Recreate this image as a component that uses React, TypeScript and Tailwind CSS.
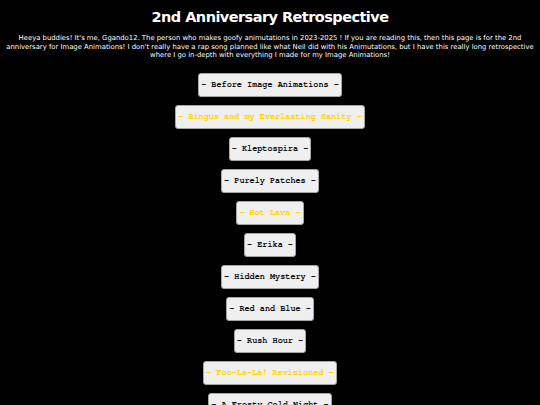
import React from "react";

type Entry = { title: string; gold?: boolean };

const entries: Entry[] = [
  { title: "Before Image Animations" },
  { title: "Bingus and my Everlasting Sanity", gold: true },
  { title: "Kleptospira" },
  { title: "Purely Patches" },
  { title: "Hot Lava", gold: true },
  { title: "Erika" },
  { title: "Hidden Mystery" },
  { title: "Red and Blue" },
  { title: "Rush Hour" },
  { title: "Foo-La-La! Revisioned", gold: true },
  { title: "A Frosty Cold Night" },
];

export default function App() {
  return (
    <div className="h-[405px] w-full overflow-hidden bg-black font-['DejaVu_Sans',Verdana,sans-serif] text-white">
      <h1 className="pt-[8px] text-center font-['Tahoma','DejaVu_Sans',sans-serif] text-[14.5px] font-bold leading-[18px] tracking-[-0.55px]">
        2nd Anniversary Retrospective
      </h1>
      <p className="mt-[8px] whitespace-nowrap text-center text-[6.85px] leading-[8.7px] text-white">
        Heeya buddies! It's me, Ggando12. The person who makes goofy animutations in 2023-2025 ! If you are
        reading this, then this page is for the 2nd
        <br />
        anniversary for Image Animations! I don't really have a rap song planned like what Neil did with his
        Animutations, but I have this really long retrospective
        <br />
        where I go in-depth with everything I made for my Image Animations!
      </p>
      <div className="mt-[13px] flex flex-col items-center gap-[8px]">
        {entries.map((e) => (
          <button
            key={e.title}
            className={`flex h-[24px] shrink-0 items-center rounded-[3px] border border-[#a6a6a6] bg-[#efefef] px-[2px] font-['Nimbus_Mono_PS','FreeMono','Courier_New','Liberation_Mono',monospace] text-[8.5px] font-bold whitespace-pre ${
              e.gold ? "text-[#ffd400]" : "text-[#111]"
            }`}
          >
            {`- ${e.title} -`}
          </button>
        ))}
      </div>
    </div>
  );
}
